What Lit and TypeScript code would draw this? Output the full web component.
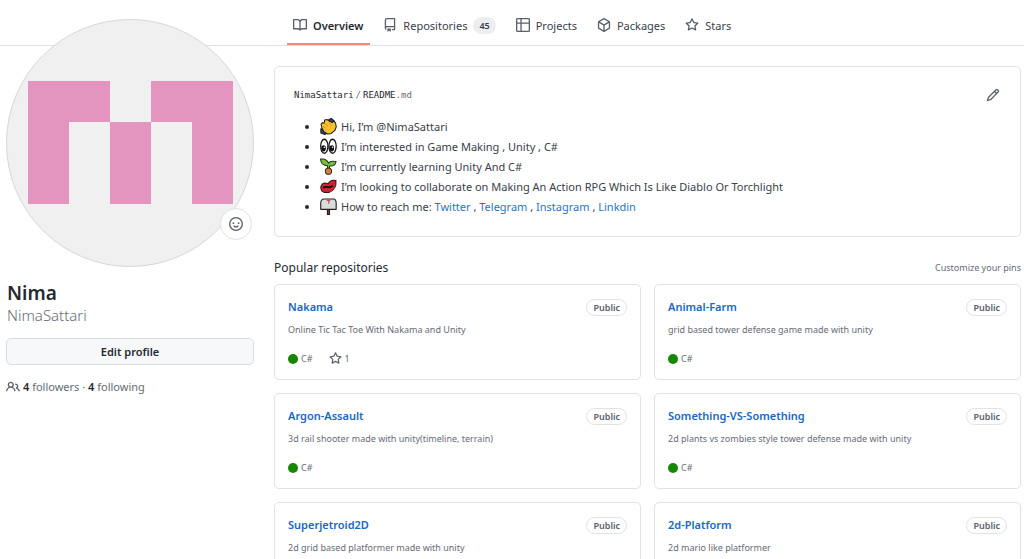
import { LitElement, html, css, svg, nothing } from "lit";
import { customElement, property } from "lit/decorators.js";

const ICONS: Record<string, string> = {
  book: "M0 1.75A.75.75 0 0 1 .75 1h4.253c1.227 0 2.317.59 3 1.501A3.743 3.743 0 0 1 11.006 1h4.245a.75.75 0 0 1 .75.75v10.5a.75.75 0 0 1-.75.75h-4.507a2.25 2.25 0 0 0-1.591.659l-.622.621a.75.75 0 0 1-1.06 0l-.622-.621A2.25 2.25 0 0 0 5.258 13H.75a.75.75 0 0 1-.75-.75Zm7.251 10.324.004-5.073-.002-2.253A2.25 2.25 0 0 0 5.003 2.5H1.5v9h3.757a3.75 3.75 0 0 1 1.994.574ZM8.755 4.75l-.004 7.322a3.752 3.752 0 0 1 1.992-.572H14.5v-9h-3.495a2.25 2.25 0 0 0-2.25 2.25Z",
  repo: "M2 2.5A2.5 2.5 0 0 1 4.5 0h8.75a.75.75 0 0 1 .75.75v12.5a.75.75 0 0 1-.75.75h-2.5a.75.75 0 0 1 0-1.5h1.75v-2h-8a1 1 0 0 0-.714 1.7.75.75 0 1 1-1.072 1.05A2.495 2.495 0 0 1 2 11.5Zm10.5-1h-8a1 1 0 0 0-1 1v6.708A2.486 2.486 0 0 1 4.500 9h8ZM5 12.25a.25.25 0 0 1 .25-.25h3.5a.25.25 0 0 1 .25.25v3.25a.25.25 0 0 1-.4.2l-1.45-1.087a.249.249 0 0 0-.3 0L5.4 15.7a.25.25 0 0 1-.4-.2Z",
  table: "M0 1.75C0 .784.784 0 1.75 0h12.5C15.216 0 16 .784 16 1.75v12.5A1.75 1.75 0 0 1 14.25 16H1.75A1.75 1.75 0 0 1 0 14.25ZM6.5 6.5v8h7.75a.25.25 0 0 0 .25-.25V6.5Zm8-1.5V1.75a.25.25 0 0 0-.25-.25H6.5V5Zm-13 1.5v7.75c0 .138.112.25.25.25H5v-8ZM5 5V1.5H1.75a.25.25 0 0 0-.25.25V5Z",
  pack: "m8.878.392 5.25 3.045c.54.314.872.89.872 1.514v6.098a1.75 1.75 0 0 1-.872 1.514l-5.25 3.045a1.75 1.75 0 0 1-1.756 0l-5.25-3.045A1.75 1.75 0 0 1 1 11.049V4.951c0-.624.332-1.201.872-1.514L7.122.392a1.75 1.75 0 0 1 1.756 0ZM7.875 1.69l-4.63 2.685L8 7.133l4.755-2.758-4.63-2.685a.248.248 0 0 0-.25 0ZM2.5 5.677v5.372c0 .09.047.171.125.216l4.625 2.683V8.432Zm6.25 8.271 4.625-2.683a.25.25 0 0 0 .125-.216V5.677L8.75 8.432Z",
  star: "M8 .25a.75.75 0 0 1 .673.418l1.882 3.815 4.21.612a.75.75 0 0 1 .416 1.279l-3.046 2.97.719 4.192a.751.751 0 0 1-1.088.791L8 12.347l-3.766 1.98a.75.75 0 0 1-1.088-.79l.72-4.194L.818 6.374a.75.75 0 0 1 .416-1.28l4.21-.611L7.327.668A.75.75 0 0 1 8 .25Zm0 2.445L6.615 5.5a.75.75 0 0 1-.564.41l-3.097.45 2.24 2.184a.75.75 0 0 1 .216.664l-.528 3.084 2.769-1.456a.75.75 0 0 1 .698 0l2.77 1.456-.53-3.084a.75.75 0 0 1 .216-.664l2.24-2.183-3.096-.45a.75.75 0 0 1-.564-.41L8 2.694Z",
  smiley: "M8 0a8 8 0 1 1 0 16A8 8 0 0 1 8 0ZM1.5 8a6.5 6.5 0 1 0 13 0 6.5 6.5 0 0 0-13 0Zm3.82 1.636a.75.75 0 0 1 1.038.175l.007.009c.103.118.22.222.35.31.264.178.683.37 1.285.37.602 0 1.02-.192 1.285-.371.13-.088.247-.192.35-.31l.007-.008a.75.75 0 0 1 1.222.87l-.022-.015c.02.013.021.015.021.015v.001l-.001.002-.002.003-.005.007-.014.019a2.066 2.066 0 0 1-.184.213c-.16.166-.338.316-.53.445-.63.418-1.37.638-2.127.629-.946 0-1.652-.308-2.126-.63a3.331 3.331 0 0 1-.715-.657l-.014-.02-.005-.006-.002-.003v-.002h-.001l.613-.432-.614.43a.75.75 0 0 1 .183-1.044ZM12 7a1 1 0 1 1-2 0 1 1 0 0 1 2 0ZM5 8a1 1 0 1 1 0-2 1 1 0 0 1 0 2Z",
  people: "M2 5.5a3.5 3.5 0 1 1 5.898 2.549 5.508 5.508 0 0 1 3.034 4.084.75.75 0 1 1-1.482.235 4 4 0 0 0-7.9 0 .75.75 0 0 1-1.482-.236A5.507 5.507 0 0 1 3.102 8.05 3.493 3.493 0 0 1 2 5.5ZM11 4a3.001 3.001 0 0 1 2.22 5.018 5.01 5.01 0 0 1 2.56 3.012.749.749 0 0 1-.885.954.752.752 0 0 1-.549-.514 3.507 3.507 0 0 0-2.522-2.372.75.75 0 0 1-.574-.73v-.352a.75.75 0 0 1 .416-.672A1.5 1.5 0 0 0 11 5.5.75.75 0 0 1 11 4Zm-5.5-.5a2 2 0 1 0-.001 3.999A2 2 0 0 0 5.5 3.5Z",
  pencil: "M11.013 1.427a1.75 1.75 0 0 1 2.474 0l1.086 1.086a1.75 1.75 0 0 1 0 2.474l-8.61 8.61c-.21.21-.47.364-.756.445l-3.251.93a.75.75 0 0 1-.927-.928l.929-3.25c.081-.286.235-.547.445-.758l8.61-8.61Zm.176 4.823L9.75 4.81l-6.286 6.287a.253.253 0 0 0-.064.108l-.558 1.953 1.953-.558a.253.253 0 0 0 .108-.064Zm1.238-3.763a.25.25 0 0 0-.354 0L10.811 3.75l1.439 1.44 1.263-1.263a.25.25 0 0 0 0-.354Z",
};

const icon = (name: string, cls = "icon") =>
  html`<svg class=${cls} viewBox="0 0 16 16" aria-hidden="true"><path fill-rule="evenodd" d=${ICONS[name]}></path></svg>`;

const EMOJI = {
  wave: svg`<g stroke="#1c1c1c" stroke-width="1" stroke-linejoin="round"><path fill="#27496b" d="M8.500 1.500l2.500-1 3 2.500v3.500l-3-1zM.8 10.500l3 1 3 3-2 1.500-4-1.500z"/><path fill="#fbc02d" d="M1 6l1.500-1.500L4 5l.500-3L7 1.500l2 1.500 3 1.500 1-1.500 2 1.500.8 4-1.300 3.500-3.500 3-3.500.5-3.500-2L2 10z"/></g><path fill="none" stroke="#c17d0c" stroke-width=".7" d="M4.500 5l3.500 3.500M8.500 4l2.500 3.500M3 8l3 2.500"/>`,
  eyes: svg`<g stroke="#161616" stroke-width="1.300"><ellipse cx="4.200" cy="8" rx="3.500" ry="6.800" fill="#fff"/><ellipse cx="12.200" cy="8" rx="3.500" ry="6.800" fill="#fff"/></g><ellipse cx="3.500" cy="10" rx="2.200" ry="3" fill="#111"/><ellipse cx="11.500" cy="10" rx="2.200" ry="3" fill="#111"/><circle cx="4.200" cy="9" r=".8" fill="#fff"/><circle cx="12.200" cy="9" r=".8" fill="#fff"/>`,
  sprout: svg`<g stroke="#23331a" stroke-width="1" stroke-linejoin="round"><path fill="#79bd3a" d="M7.300 11V7.500C3 7.500.8 5 .5 1 4 .5 7 1.500 8.200 5 9.500 3 12.500 2.800 15.600 3.500 15 6.500 12.500 8 9.300 7.700L9 11z"/><circle cx="8.200" cy="12.800" r="3" fill="#e27a3b"/></g>`,
  heart: svg`<g stroke="#351015" stroke-width="1" stroke-linejoin="round"><path fill="#d3202d" d="M.8 10C.5 6.500 3 4.500 6 5l2 .5C9.500 2.500 12 1.500 15.500 2.500c.5 5-1.500 10-7 11.500C5 14.500 1.500 13.500.8 10z"/></g><path d="M3 9.500c3-2.500 5.500 1.500 9.500-2" fill="none" stroke="#1c1013" stroke-width="1.900"/>`,
  mailbox: svg`<g stroke="#29211f" stroke-width="1.100" stroke-linejoin="round"><path fill="#6b4a3a" d="M7.200 10.500h2V16h-2z"/><path fill="#d9dcdd" d="M.7 5C.7 2.500 2 1 4 1h9c1.800 0 2.700 1.500 2.700 4v6H.7z"/></g><path d="M8.500 1.500v4M6.500 2.200h3.500" stroke="#d24848" stroke-width="1.200"/>`,
};

const emoji = (name: keyof typeof EMOJI, label: string) =>
  html`<svg class="emoji" viewBox="0 0 16.500 16.500" role="img" aria-label=${label}>${EMOJI[name]}</svg>`;

@customElement("repo-card")
export class RepoCard extends LitElement {
  @property() name = "";
  @property() description = "";
  @property({ type: Number }) stars = 0;

  static styles = css`
    :host {
      display: flex;
      flex-direction: column;
      box-sizing: border-box;
      border: 1px solid #dfe2e6;
      border-radius: 5px;
      padding: 13px;
      min-width: 0;
    }
    .head {
      display: flex;
      align-items: center;
      justify-content: space-between;
      height: 18px;
    }
    .name {
      font-size: 11px;
      font-weight: 600;
      line-height: 18px;
      color: #1668c4;
      text-decoration: none;
    }
    .label {
      border: 1px solid #dfe2e6;
      border-radius: 9px;
      padding: 0 6px;
      font-size: 9px;
      line-height: 15px;
      font-weight: 600;
      color: #59606a;
    }
    .description {
      margin: 6px 0 13px;
      font-size: 9px;
      line-height: 16px;
      color: #656c76;
    }
    .meta {
      display: flex;
      align-items: center;
      gap: 16px;
      font-size: 9px;
      line-height: 15px;
      color: #656c76;
    }
    .item {
      display: flex;
      align-items: center;
      gap: 3px;
      color: inherit;
      text-decoration: none;
    }
    .dot {
      width: 10px;
      height: 10px;
      border-radius: 50%;
      background: #178600;
    }
    .icon {
      width: 13px;
      height: 13px;
      fill: #59606a;
    }
  `;

  render() {
    return html`
      <div class="head"><a class="name" href="#">${this.name}</a><span class="label">Public</span></div>
      <p class="description">${this.description}</p>
      <div class="meta">
        <span class="item"><span class="dot"></span>C#</span>
        ${this.stars ? html`<a class="item" href="#" aria-label="stars">${icon("star")}${this.stars}</a>` : nothing}
      </div>
    `;
  }
}

@customElement("app-root")
export class AppRoot extends LitElement {
  private tabs = [
    { icon: "book", text: "Overview", current: true },
    { icon: "repo", text: "Repositories", count: 45 },
    { icon: "table", text: "Projects" },
    { icon: "pack", text: "Packages" },
    { icon: "star", text: "Stars" },
  ];

  private repos = [
    { name: "Nakama", description: "Online Tic Tac Toe With Nakama and Unity", stars: 1 },
    { name: "Animal-Farm", description: "grid based tower defense game made with unity" },
    { name: "Argon-Assault", description: "3d rail shooter made with unity(timeline, terrain)" },
    { name: "Something-VS-Something", description: "2d plants vs zombies style tower defense made with unity" },
    { name: "Superjetroid2D", description: "2d grid based platformer made with unity" },
    { name: "2d-Platform", description: "2d mario like platformer" },
  ];

  static styles = css`
    :host {
      display: block;
      height: 100vh;
      overflow: hidden;
      background: #fff;
      color: #24292f;
      font-family: "Noto Sans", "Open Sans", sans-serif;
      font-size: 11px;
    }
    a {
      color: #1f75cb;
      text-decoration: none;
    }
    .icon {
      flex: none;
      width: 14px;
      height: 14px;
      fill: #59606a;
    }
    .topbar {
      display: grid;
      grid-template-columns: 248px minmax(0, 1fr);
      column-gap: 20px;
      padding: 0 3px 0 6px;
      border-bottom: 1px solid #dfe2e6;
    }
    .tabs {
      grid-column: 2;
      display: flex;
      gap: 7px;
      height: 45px;
      padding-left: 13px;
    }
    .tab {
      display: flex;
      align-items: center;
      gap: 6px;
      box-sizing: border-box;
      padding: 7px 7px 0 6px;
      border-bottom: 2px solid transparent;
      color: #3a4048;
    }
    .tab.current {
      border-color: #f0897a;
      font-weight: 600;
      color: #24292f;
    }
    .count {
      padding: 0 6px;
      border-radius: 9px;
      background: #eceef1;
      font-size: 9px;
      line-height: 17px;
      font-weight: 600;
    }
    .layout {
      display: grid;
      grid-template-columns: 248px minmax(0, 1fr);
      column-gap: 20px;
      padding: 0 3px 0 6px;
    }
    .side {
      margin-top: -27px;
    }
    .avatar {
      position: relative;
    }
    .identicon {
      display: block;
      width: 100%;
    }
    .status {
      position: absolute;
      right: 2px;
      bottom: 27px;
      display: grid;
      place-items: center;
      width: 32px;
      height: 32px;
      padding: 0;
      border: 1px solid #dfe2e6;
      border-radius: 50%;
      background: #fff;
    }
    .names {
      margin: 13px 0 13px 1px;
      font-weight: 400;
    }
    .full {
      display: block;
      font-size: 19px;
      line-height: 26px;
      font-weight: 600;
    }
    .login {
      display: block;
      font-size: 15px;
      line-height: 19px;
      font-weight: 300;
      color: #656c76;
    }
    .edit {
      display: block;
      width: 100%;
      height: 27px;
      padding: 0;
      border: 1px solid #d9dde2;
      border-radius: 5px;
      background: #f6f8fa;
      font: 600 11px/24px "Noto Sans", "Open Sans", sans-serif;
      color: #24292f;
    }
    .follow {
      display: flex;
      align-items: center;
      gap: 3px;
      margin-top: 13px;
      line-height: 18px;
      color: #656c76;
    }
    .follow a {
      color: inherit;
    }
    .follow b {
      font-weight: 600;
      color: #24292f;
    }
    .main {
      padding-top: 20px;
    }
    .readme {
      border: 1px solid #dfe2e6;
      border-radius: 5px;
      padding: 20px 20px 19px 19px;
    }
    .readme-head {
      display: flex;
      align-items: center;
      justify-content: space-between;
      height: 16px;
      font: 9px/16px "DejaVu Sans Mono", monospace;
    }
    .edit-readme {
      display: flex;
    }
    .muted {
      color: #656c76;
    }
    .slash {
      padding: 0 2px;
      color: #656c76;
    }
    .list {
      margin: 14px 0 0;
      padding-left: 26px;
      line-height: 20px;
      color: #3a4048;
    }
    .list li::marker {
      color: #24292f;
    }
    .emoji {
      width: 17px;
      height: 17px;
      margin-right: 4px;
      vertical-align: -4px;
    }
    .popular {
      display: flex;
      align-items: center;
      justify-content: space-between;
      margin: 21px 0 6px;
      line-height: 20px;
    }
    .popular h2 {
      margin: 0;
      font-size: 12px;
      font-weight: 400;
    }
    .customize {
      font-size: 9px;
      color: #656c76;
    }
    .cards {
      display: grid;
      grid-template-columns: repeat(2, minmax(0, 1fr));
      gap: 13px;
    }
  `;

  render() {
    return html`
      <header class="topbar">
        <nav class="tabs" aria-label="Profile">
          ${this.tabs.map(
            (t) => html`<a class="tab ${t.current ? "current" : ""}" href="#">
              ${icon(t.icon)}<span>${t.text}</span>${t.count ? html`<span class="count">${t.count}</span>` : nothing}
            </a>`
          )}
        </nav>
      </header>
      <div class="layout">
        <aside class="side">
          <div class="avatar">
            <svg class="identicon" viewBox="0 0 248 248" role="img" aria-label="Avatar">
              <circle cx="124" cy="124" r="123.500" fill="#f0f0f0" stroke="#d5d7da"></circle>
              <path fill="#e395bf" d="M22 62h82v41H63v82H22zM145 62h82v123h-41v-82h-41zM104 103h41v82h-41z"></path>
            </svg>
            <button class="status" aria-label="Set status">${icon("smiley")}</button>
          </div>
          <h1 class="names"><span class="full">Nima</span><span class="login">NimaSattari</span></h1>
          <button class="edit">Edit profile</button>
          <div class="follow">
            ${icon("people")}<span><a href="#"><b>4</b> followers</a> · <a href="#"><b>4</b> following</a></span>
          </div>
        </aside>
        <main class="main">
          <section class="readme">
            <div class="readme-head">
              <span>NimaSattari<span class="slash">/</span>README<span class="muted">.md</span></span>
              <a class="edit-readme" href="#" aria-label="Edit README">${icon("pencil")}</a>
            </div>
            <ul class="list">
              <li>${emoji("wave", "wave")}Hi, I’m @NimaSattari</li>
              <li>${emoji("eyes", "eyes")}I’m interested in Game Making , Unity , C#</li>
              <li>${emoji("sprout", "seedling")}I’m currently learning Unity And C#</li>
              <li>${emoji("heart", "heart")}I’m looking to collaborate on Making An Action RPG Which Is Like Diablo Or Torchlight</li>
              <li>${emoji("mailbox", "mailbox")}How to reach me: <a href="#">Twitter</a> , <a href="#">Telegram</a> , <a href="#">Instagram</a> , <a href="#">Linkdin</a></li>
            </ul>
          </section>
          <div class="popular"><h2>Popular repositories</h2><a class="customize" href="#">Customize your pins</a></div>
          <section class="cards">
            ${this.repos.map(
              (r) => html`<repo-card .name=${r.name} .description=${r.description} .stars=${r.stars ?? 0}></repo-card>`
            )}
          </section>
        </main>
      </div>
    `;
  }
}
